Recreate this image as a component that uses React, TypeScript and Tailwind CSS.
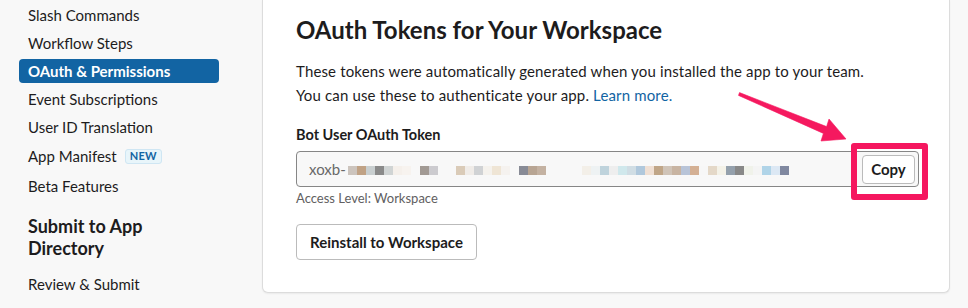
const navItems = [
  { label: "Slash Commands" },
  { label: "Workflow Steps" },
  { label: "OAuth & Permissions", active: true },
  { label: "Event Subscriptions" },
  { label: "User ID Translation" },
  { label: "App Manifest", badge: "NEW", tall: true },
  { label: "Beta Features" },
];

// pixelated (redacted) token, one colour per 9px block, "" = blank
const tokenBlocks = [
  "#ccc4bd", "#c0a285", "#c9cfd0", "#8a8a8a", "#d0d4d4", "#f5f0eb", "#f7f3ef", "",
  "#a29a94", "#cccbcf", "", "", "#dacbb8", "#f0ece8", "#d0d2d4", "#f5f2ed",
  "#efe5d5", "#f5f2ef", "", "#888b96", "#b8a593", "#c4b2a2", "", "", "", "",
  "#f3efe8", "#eef2f3", "#bfd3dc", "#eeeeee", "#d0e8ec", "#d0dde4", "#b0c8dc",
  "#f0e0d4", "#c0a688", "#d0c4b8", "#c8b4a2", "#b8c4d8", "#d4b094", "#f7f7f7",
  "#e4d8c8", "#f4f2e8", "#94a0ac", "#888888", "#f0f2ea", "#f4f4f4", "#b0d4e8",
  "#dce8f4", "#8088a0",
];

const Sidebar: React.FC = () => (
  <aside className="w-[262px] shrink-0 pt-[1px] pl-[19px]">
    <div className="w-[200px]">
      {navItems.map((item) => (
        <div
          key={item.label}
          className={`flex items-center ${item.tall ? "h-[31px]" : "h-7"}`}
        >
          <div
            className={`w-full h-6 flex items-center pl-[9px] rounded-[4px] text-[15px] ${
              item.active ? "bg-[#1264a3] text-white font-bold" : "text-[#1d1c1d]"
            }`}
          >
            {item.label}
            {item.badge && (
              <span className="ml-[8px] h-[15px] px-[4px] flex items-center rounded-[3px] border border-[#cfe6f3] bg-[#e8f5fa] text-[11px] font-bold text-[#1264a3] tracking-[0.3px]">
                {item.badge}
              </span>
            )}
          </div>
        </div>
      ))}
      <h3 className="mt-[15px] pl-[9px] pr-[30px] text-[18px] leading-[22px] font-bold text-[#1d1c1d]">
        Submit to App Directory
      </h3>
      <div className="mt-[11px] h-7 flex items-center pl-[9px] text-[15px] text-[#1d1c1d]">
        Review &amp; Submit
      </div>
    </div>
  </aside>
);

const TokenCard: React.FC = () => (
  <section className="relative w-[688px] h-[293px] shrink-0 bg-white border border-t-0 border-[#dcdcdc] rounded-b-[6px] shadow-[0_1px_2px_rgba(0,0,0,0.06)] pl-[33px] pt-[14px]">
    <h2 className="text-[24px] leading-[32px] font-bold text-[#1d1c1d]">
      OAuth Tokens for Your Workspace
    </h2>
    <p className="mt-[13px] text-[15px] leading-[24px] tracking-[0.15px] text-[#1d1c1d]">
      These tokens were automatically generated when you installed the app to your team.
      <br />
      You can use these to authenticate your app.{" "}
      <span className="text-[#1264a3]">Learn more.</span>
    </p>
    <div className="mt-[18px] text-[14.5px] leading-[20px] font-bold text-[#1d1c1d]">
      Bot User OAuth Token
    </div>
    <div className="mt-[6px] w-[623px] h-9 flex items-center justify-between rounded-[4px] border border-[#868686] bg-[#f8f8f8] pl-[12px] pr-[3px]">
      <div className="flex items-center text-[15px] text-[#696969]">
        <span>xoxb-</span>
        <div className="flex ml-[2px] mt-[2px]">
          {tokenBlocks.map((c, i) => (
            <span
              key={i}
              className="block w-[9px] h-[9px]"
              style={{ backgroundColor: c || "transparent" }}
            />
          ))}
        </div>
      </div>
      <button className="h-[29px] w-[53px] rounded-[4px] border border-[#bbbbbb] bg-white text-[15px] font-bold text-[#1d1c1d]">
        Copy
      </button>
    </div>
    <div className="mt-[3px] text-[13px] leading-[16px] text-[#616061]">
      Access Level: Workspace
    </div>
    <button className="mt-[18px] h-9 w-[181px] rounded-[4px] border border-[#bbbbbb] bg-white text-[15px] font-bold text-[#1d1c1d]">
      Reinstall to Workspace
    </button>

    {/* annotation: arrow + highlight box */}
    <svg
      className="absolute left-0 top-0 pointer-events-none"
      width="688"
      height="293"
      viewBox="0 0 688 293"
    >
      <polygon
        points="476.5,92.6 563.6,126.6 566,119 583,139 558,141 560.4,133.4 475.5,95.4"
        fill="#f5195f"
        stroke="#f5195f"
        strokeWidth="0.6"
        strokeLinejoin="round"
      />
    </svg>
    <div className="absolute left-[588px] top-[143px] w-[77px] h-[57px] rounded-[3px] border-[6px] border-[#f5175f]" />
  </section>
);

export default function App() {
  return (
    <div
      className="w-[968px] h-[308px] overflow-hidden bg-[#f8f8f8] flex"
      style={{ fontFamily: "Lato, 'Noto Sans', sans-serif" }}
    >
      <Sidebar />
      <TokenCard />
    </div>
  );
}
